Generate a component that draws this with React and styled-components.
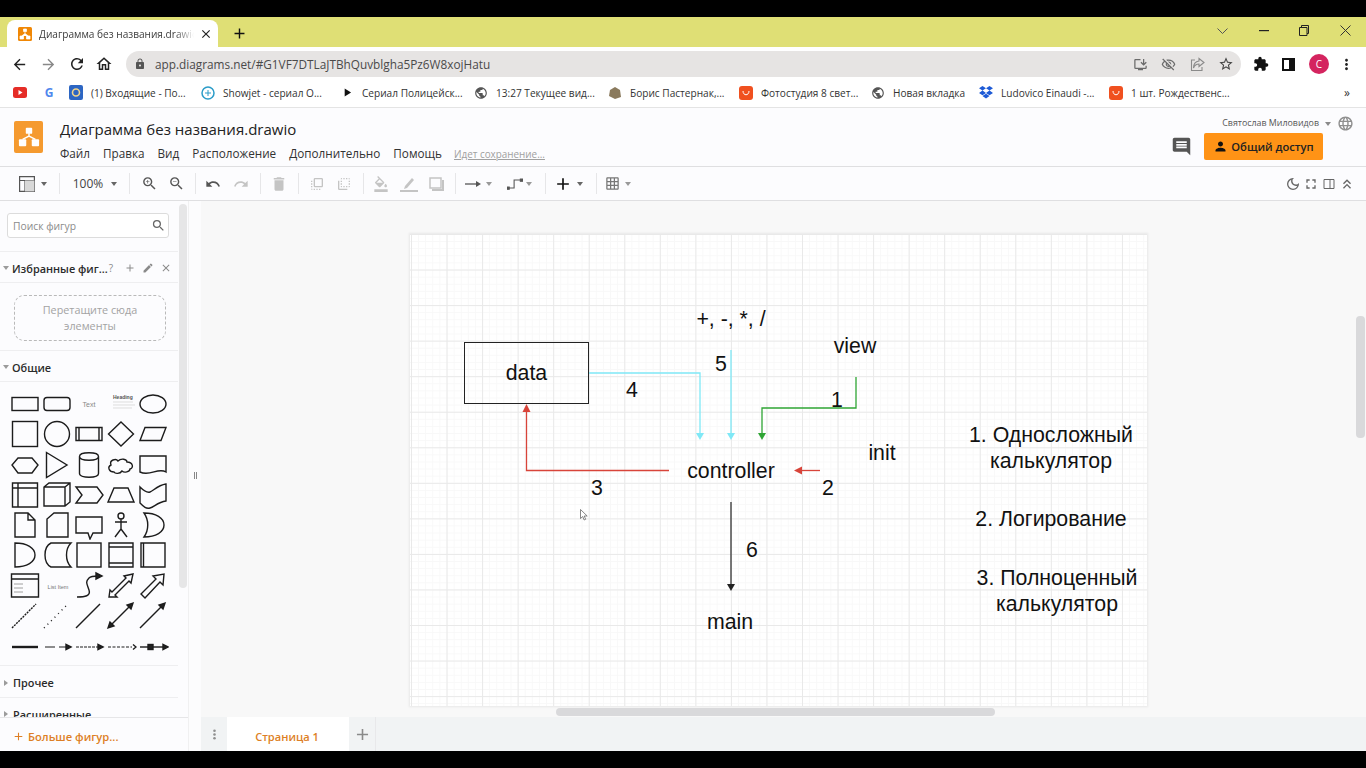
import React from 'react';
import styled, { createGlobalStyle } from 'styled-components';
import {
  MdArrowBack, MdArrowForward, MdRefresh, MdLock, MdStarBorder, MdExtension, MdMoreVert, MdPerson,
  MdZoomIn, MdZoomOut, MdUndo, MdRedo, MdDelete, MdFlipToFront, MdFlipToBack, MdFormatColorFill,
  MdOutlineDarkMode, MdFullscreen, MdKeyboardDoubleArrowUp, MdLanguage, MdSearch, MdEdit, MdClose, MdAdd,
  MdGridOn, MdComment, MdPublic, MdPlayArrow, MdOutlineHome, MdInstallDesktop, MdOutlineVisibilityOff,
} from 'react-icons/md';

const Global = createGlobalStyle`
  html, body { margin: 0; padding: 0; background: #000; overflow: hidden; }
  * { box-sizing: border-box; }
  body { font-family: "Open Sans", "Liberation Sans", sans-serif; }
`;

const Page = styled.div`
  width: 1366px; height: 768px; display: flex; flex-direction: column; background: #000; overflow: hidden;
`;
const BlackBand = styled.div`height: ${p => p.$h}px; flex: none; background: #000;`;

/* browser chrome */
const TabStrip = styled.div`
  height: 30px; flex: none; background: #dfdf75; display: flex; align-items: flex-end; padding-left: 7px; position: relative;
`;
const Tab = styled.div`
  width: 211px; height: 27px; background: #fff; border-radius: 8px 8px 0 0; display: flex; align-items: center; padding-left: 11px;
`;
const TabTitle = styled.span`
  font: 10.1px "Open Sans", sans-serif; color: #3c3c3c; margin-left: 7px; width: 155px; white-space: nowrap; overflow: hidden;
  -webkit-mask-image: linear-gradient(90deg, #000 88%, transparent 100%);
  mask-image: linear-gradient(90deg, #000 88%, transparent 100%);
`;
const TabClose = styled.span`display: flex; margin-left: 5px; color: #222;`;
const NewTab = styled.span`display: flex; margin: 0 0 5px 13px; color: #111;`;
const WindowControls = styled.div`
  margin-left: auto; height: 27px; display: flex; align-items: center; color: #333; padding-right: 13px; margin-bottom: 3px;
`;
const WinBtn = styled.span`display: flex; justify-content: center; width: 16px; margin-left: ${p => p.$ml}px;`;

const NavBar = styled.div`height: 31px; flex: none; background: #fff; display: flex; align-items: center; padding: 3px 0 0 11px;`;
const NavIcon = styled.span`display: flex; width: ${p => p.$w}px; flex: none; justify-content: flex-start; color: ${p => p.$c || '#222'};`;
const Omnibox = styled.div`
  width: 1115px; height: 26px; border-radius: 13px; background: #e6e4e3; display: flex; align-items: center; padding: 0 0 0 8px;
`;
const Url = styled.span`font: 11.8px "Open Sans", sans-serif; color: #4a4a4a; margin-left: 9px; flex: 1; white-space: nowrap;`;
const OmniIcon = styled.span`display: flex; width: 28.5px; justify-content: center; color: ${p => p.$c || '#6b6b6b'};`;
const OmniEnd = styled.span`width: 1px; flex: none;`;
const NavRight = styled.div`display: flex; align-items: center; margin-left: 12px;`;
const Avatar = styled.span`
  width: 20px; height: 20px; border-radius: 50%; background: #d4245f; color: #fff; font: 10px "Open Sans", sans-serif; display: flex; align-items: center; justify-content: center; margin: 0 9px 0 14px;
`;

const Bookmarks = styled.div`
  height: 30px; flex: none; background: #fff; border-bottom: 1px solid #e4e4e4; display: flex; align-items: center; padding-left: 13px; position: relative;
`;
const Bookmark = styled.span`
  display: flex; align-items: center; width: ${p => p.$w}px; flex: none; font: 10.1px "Open Sans", sans-serif; color: #333; white-space: nowrap; gap: 8px;
`;
const BmIcon = styled.span`display: flex; width: 14px; height: 14px; flex: none; align-items: center; justify-content: center;`;
const GoogleG = styled.span`font: 700 12px "Open Sans", sans-serif; color: #4f87ed;`;
const More = styled.span`margin-left: auto; margin-right: 16px; font: 12px "Open Sans", sans-serif; color: #333;`;

/* draw.io header */
const Header = styled.header`
  height: 59px; flex: none; background: #fcfcfe; border-bottom: 1px solid #dfdfe1; display: flex; padding: 13px 0 0 14px; position: relative;
`;
const Logo = styled.div`width: 29px; height: 32px; border-radius: 2px; background: #f59a2f; flex: none; display: flex; align-items: center; justify-content: center;`;
const TitleBlock = styled.div`margin-left: 17px; display: flex; flex-direction: column;`;
const Title = styled.div`font: 15px/17px "Open Sans", sans-serif; color: #222;`;
const Menu = styled.nav`display: flex; align-items: baseline; gap: 13px; margin-top: 8px;`;
const MenuItem = styled.span`font: 11.72px/15px "Open Sans", sans-serif; color: #333;`;
const Saving = styled.span`font: 9.9px/15px "Open Sans", sans-serif; color: #a0a0a0; text-decoration: underline; margin-left: -1px;`;
const HeaderRight = styled.div`margin-left: auto; display: flex; flex-direction: column; align-items: flex-end; padding-right: 12px; margin-top: -6px;`;
const UserRow = styled.div`display: flex; align-items: center; color: #8f8f8f;`;
const UserName = styled.span`font: 8.85px "Open Sans", sans-serif; color: #555; margin: 0 6px 2px 0;`;
const Caret = styled.span`
  display: block; width: 0; height: 0; flex: none; border-left: 3.5px solid transparent; border-right: 3.5px solid transparent; border-top: 4px solid ${p => p.$c || '#8a8a8a'};
`;
const Globe = styled.span`display: flex; margin-left: 6px;`;
const ShareRow = styled.div`display: flex; align-items: center; margin-top: 1px; margin-right: 31px;`;
const ShareBtn = styled.div`
  width: 119px; height: 27px; background: #ff9316; border-radius: 2px; margin-left: 12px; display: flex; align-items: center; justify-content: center; gap: 3px;
  font: 600 11.2px "Open Sans", sans-serif; color: #222;
`;

/* toolbar */
const Toolbar = styled.div`
  height: 34px; flex: none; background: #fcfcfe; border-bottom: 1px solid #dfdfe1; display: flex; align-items: center; padding: 0 11px 0 13px;
`;
const Tool = styled.span`
  display: flex; width: ${p => p.$w}px; margin-left: ${p => p.$ml || 0}px; flex: none; align-items: center; justify-content: center; color: ${p => p.$off ? '#c4c4c4' : '#555'};
  & > svg { flex: none; }
`;
const Zoom100 = styled.span`width: 34px; flex: none; font: 12px "Open Sans", sans-serif; color: #444; text-align: center;`;
const Sep = styled.span`
  width: ${p => p.$w}px; height: 21px; flex: none; display: flex; justify-content: center;
  &::before { content: ""; width: 1px; height: 100%; background: #e6e6e8; }
`;
const ToolRight = styled.div`margin-left: auto; display: flex; align-items: center; gap: 2px; color: #666;`;

/* main */
const Body = styled.div`flex: 1; min-height: 0; display: flex; background: #fcfcfe;`;
const Sidebar = styled.aside`width: 188px; flex: none; display: flex; flex-direction: column;`;
const SideScroll = styled.div`height: 516px; flex: none; display: flex; overflow: hidden;`;
const SideContent = styled.div`width: 178px; flex: none;`;
const SideTrack = styled.div`width: 10px; flex: none; padding: 3px 1px 0;`;
const SideThumb = styled.div`width: 8px; height: 384px; border-radius: 4px; background: #e6e6e7;`;
const SearchWrap = styled.div`height: 51px; padding: 12px 0 0 7px; border-bottom: 1px solid #eeeef0;`;
const Search = styled.div`
  width: 162px; height: 25px; background: #fff; border: 1px solid #dcdcdc; border-radius: 3px; display: flex; align-items: center; justify-content: space-between; padding: 0 2px 0 5px;
  font: 10.3px "Open Sans", sans-serif; color: #8b8b8b;
`;
const SectionHead = styled.div`
  height: ${p => p.$h}px; display: flex; align-items: center; border-bottom: ${p => p.$flat ? 'none' : '1px solid #eeeef0'};
  padding: ${p => p.$flat ? 0 : 2}px 0 0 3px; font: 600 10.9px "Open Sans", sans-serif; color: #2b2b2b; white-space: nowrap;
`;
const Tri = styled.span`
  display: block; width: 0; height: 0; flex: none; margin-right: 3px;
  ${p => p.$closed
    ? 'border-top: 3.5px solid transparent; border-bottom: 3.5px solid transparent; border-left: 4px solid #9b9b9b; margin-left: 1px; margin-right: 5px;'
    : 'border-left: 3.5px solid transparent; border-right: 3.5px solid transparent; border-top: 4px solid #9b9b9b;'}
`;
const FavTools = styled.span`display: flex; align-items: center; margin-left: 1px; color: #8a8a8a; font-weight: 400;`;
const FavHelp = styled.span`font-size: 10px; width: 11px;`;
const FavTool = styled.span`display: flex; margin: 0 ${p => p.$r}px 0 ${p => p.$l}px;`;
const FavBox = styled.div`height: 68px; padding: 12px 0 0 14px; border-bottom: 1px solid #eeeef0;`;
const Dashed = styled.div`
  width: 152px; height: 46px; border: 1px dashed #b9b9b9; border-radius: 10px; display: flex; align-items: center; justify-content: center; text-align: center;
  font: 10.8px/16px "Open Sans", sans-serif; color: #a3a3a3;
`;
const ShapeGrid = styled.div`
  height: 284px; border-bottom: 1px solid #eeeef0; padding: 7px 0 0 9px; display: grid; grid-template-columns: repeat(5, 32px); grid-auto-rows: 30.25px;
`;
const Shape = styled.svg`display: block; width: 32px; height: 30px; fill: none; stroke: #1c1c1c; stroke-width: 1.4;`;
const MoreShapes = styled.div`
  flex: 1; border-top: 1px solid #e6e6e8; display: flex; align-items: center; padding: 3px 0 0 12px; gap: 3px; font: 600 11.2px "Open Sans", sans-serif; color: #dd7f25;
`;
const Gutter = styled.div`
  width: 13px; flex: none; background: #fcfcfd; border-left: 1px solid #f0f0f1; display: flex; flex-direction: column; align-items: center; padding-top: 271px;
`;
const Grip = styled.span`width: 3px; height: 7px; border-left: 1px solid #888; border-right: 1px solid #888;`;
const Work = styled.main`flex: 1; min-width: 0; display: flex; flex-direction: column;`;
const Canvas = styled.div`height: 516px; flex: none; background: #f8f8f8; position: relative; overflow: hidden;`;
const Sheet = styled.div`
  position: absolute; left: 209px; top: 33px; width: 737px; height: 472px; box-shadow: 0 0 2px 1px #e8e8e8;
  background-color: #fff;
  background-image:
    linear-gradient(#e9e9e9 1px, transparent 1px),
    linear-gradient(90deg, #e9e9e9 1px, transparent 1px),
    linear-gradient(#f8f8f8 1px, transparent 1px),
    linear-gradient(90deg, #f8f8f8 1px, transparent 1px);
  background-size: 35.55px 35.55px, 35.55px 35.55px, 7.11px 7.11px, 7.11px 7.11px;
  background-position: 0 0, 1px 0, 0 0, 1px 0;
`;
const Wires = styled.svg`position: absolute; left: 0; top: 0; width: 738px; height: 472px; fill: none;`;
const DataNode = styled.div`
  position: absolute; left: 54px; top: 108px; width: 125px; height: 62px; border: 1px solid #222; background: transparent;
  display: flex; align-items: center; justify-content: center; font: 21.3px "Liberation Sans", sans-serif; color: #111;
`;
const Label = styled.div`
  position: absolute; left: ${p => p.$x - 410}px; top: ${p => p.$y - 234}px; transform: translate(-50%, -50%); white-space: nowrap; text-align: center;
  font: 21.3px/26px "Liberation Sans", sans-serif; color: #111;
`;
const HScroll = styled.div`position: absolute; left: 355px; top: 507px; width: 439px; height: 8px; border-radius: 4px; background: #d9d9db;`;
const VScroll = styled.div`position: absolute; right: 1px; top: 115px; width: 9px; height: 122px; border-radius: 4px; background: #d9d9db;`;
const PointerMark = styled.svg`position: absolute; left: 170px; top: 275px; width: 9px; height: 12px;`;
const TabBar = styled.div`flex: 1; background: #f1f3f4; display: flex; align-items: stretch;`;
const Dots = styled.span`width: 26px; flex: none; display: flex; align-items: center; justify-content: center; color: #8f8f8f;`;
const PageTab = styled.div`
  width: 122px; flex: none; background: #fff; display: flex; align-items: center; justify-content: center; padding: 5px 2px 0 0; font: 600 11.1px "Open Sans", sans-serif; color: #dd7f25;
`;
const AddPage = styled.span`width: 27px; flex: none; display: flex; align-items: center; justify-content: center; color: #8a8a8a; border-right: 1px solid #e8e8ea;`;

const DotsIcon = () => (
  <svg width="13" height="13" viewBox="0 0 24 24" fill="currentColor">
    <circle cx="12" cy="5" r="2.4" /><circle cx="12" cy="12" r="2.4" /><circle cx="12" cy="19" r="2.4" />
  </svg>
);

const DrawLogo = ({ s = 22, bg = '#fff' }) => (
  <svg width={s} height={s} viewBox="0 0 24 24">
    <rect x="8.5" y="2" width="7" height="6.5" rx="1" fill={bg} />
    <rect x="1" y="14.5" width="8" height="7.5" rx="1" fill={bg} />
    <rect x="15" y="14.5" width="8" height="7.5" rx="1" fill={bg} />
    <path d="M12 8v3.5M5 14.5L12 11l7 3.5" stroke={bg} strokeWidth="1.6" fill="none" />
  </svg>
);

const shapes = [
  <rect x="3" y="8.5" width="26" height="13" />,
  <rect x="3" y="8.5" width="26" height="13" rx="3" />,
  <text x="16" y="18" fontSize="7" fill="#888" stroke="none" textAnchor="middle" fontFamily="Liberation Sans">Text</text>,
  <g stroke="none"><text x="8" y="10" fontSize="5" fontWeight="700" fill="#555" fontFamily="Liberation Sans">Heading</text><path d="M8 13h20M8 16h22M8 19h19" stroke="#ddd" strokeWidth="1" /></g>,
  <ellipse cx="16" cy="15" rx="13" ry="9" />,

  <rect x="3.5" y="2.5" width="25" height="25" />,
  <circle cx="16" cy="15" r="12.5" />,
  <path d="M3 8.5h26v13H3zM6 8.5v13M26 8.5v13" />,
  <path d="M16 3l12.5 12L16 27 3.5 15z" />,
  <path d="M8 8.5h21l-5 13H3z" />,

  <path d="M9 8h14l6 7-6 8H9l-6-8z" />,
  <path d="M5.5 2.5L26 15 5.5 27.5z" />,
  <path d="M6.5 6.5c0-5 19-5 19 0v17c0 5-19 5-19 0zM6.5 6.5c0 5 19 5 19 0" />,
  <path d="M9 22c-5 0-7-5-3-7-2-5 5-7 7-4 3-3 9-2 9 1 6 0 7 6 3 7 0 3-6 4-8 2-2 3-7 3-8 1z" />,
  <path d="M3 6h26v16c-8-5-16 5-26 0z" />,

  <path d="M3.5 3h25v24h-25zM3.5 8h25M9 3v24" />,
  <path d="M3 7l5-4h21v19l-5 4H3zM3 7h21v19M24 7l5-4" />,
  <path d="M3 7h21l6 8-6 8H3l6-8z" />,
  <path d="M9 8h14l6 14H3z" />,
  <path d="M3 7c4 4 7 6 10 5s8-7 16-8v17c-8 1-12 6-16 7s-6-1-10-5z" />,

  <path d="M6 3h13l7 7v17H6zM19 3v7h7" />,
  <path d="M13 3h14v24H6V9z" />,
  <path d="M3 7h26v16H20l-3 6-2-6H3z" />,
  <path d="M16 3a3 3 0 100 6 3 3 0 000-6zM16 9v10M10 12h12M16 19l-6 8M16 19l6 8" />,
  <path d="M7 3c12 0 20 5 20 12s-8 12-20 12c5-7 5-17 0-24z" />,

  <path d="M6 3c12 0 20 5 20 12S18 27 6 27z" />,
  <path d="M10 3h20c-6 6-6 18 0 24H10C2 23 2 7 10 3z" />,
  <rect x="4" y="3" width="24" height="24" />,
  <path d="M4 3h24v24H4zM4 7h24M4 23h24" />,
  <path d="M4 3h24v24H4zM6.5 3v24" />,

  <g><path d="M2.5 3h27v23h-27zM2.5 8h27" /><path d="M5 13h9M5 17h9M5 21h9" stroke="#888" strokeWidth=".8" /></g>,
  <text x="17" y="18" fontSize="5.5" fill="#777" stroke="none" textAnchor="middle" fontFamily="Liberation Sans">List Item</text>,
  <g><path d="M4 26c8 0 14-1 12-7s-4-8 0-12c2-2 6-2 9-2" /><path d="M23 2l6 3-6 3z" fill="#222" /></g>,
  <path d="M4 26l1-7 2 2L21 7l-2-2 9-2-2 9-2-2L10 24l2 2z" />,
  <path d="M4 23L19 8l-3-3 11-2-1 11-3-3L8 27z" />,

  <path d="M3 27L27 3" strokeDasharray="2 1" />,
  <path d="M3 27L27 3" strokeDasharray="1 4" />,
  <path d="M3 27L27 3" />,
  <g><path d="M6 24L25 5" /><path d="M3 27l2-6 4 4zM28 2l-2 6-4-4z" fill="#222" /></g>,
  <g><path d="M3 27L25 5" /><path d="M28 2l-2 6-4-4z" fill="#222" /></g>,

  <path d="M3 16h26" strokeWidth="2.4" />,
  <g><path d="M4 16h10M18 16h8" strokeWidth="1" /><path d="M30 16l-5-2.5v5z" fill="#222" /></g>,
  <g><path d="M3 16h24" strokeWidth="1" strokeDasharray="3 1" /><path d="M30 16l-5-2.5v5z" fill="#222" /></g>,
  <g><path d="M3 16h24" strokeWidth="1" strokeDasharray="3 1.5" /><path d="M28 13.5l3 2.5-3 2.5" /></g>,
  <g><path d="M3 16h26" /><rect x="11" y="13.5" width="5" height="5" fill="#222" /><path d="M31 16l-5-2.5v5z" fill="#222" /></g>,
];

const Basket = () => (
  <svg width="14" height="14" viewBox="0 0 14 14"><rect width="14" height="14" rx="3" fill="#f0501f" /><path d="M4 5c0 5 6 5 6 0" stroke="#fff" fill="none" /></svg>
);

const bookmarks = [
  { w: 29, icon: <svg width="14" height="11" viewBox="0 0 14 11"><rect width="14" height="11" rx="2.5" fill="#e52d27" /><path d="M5.5 3l4 2.5-4 2.5z" fill="#fff" /></svg> },
  { w: 27, icon: <GoogleG>G</GoogleG> },
  { w: 132, icon: <svg width="14" height="15" viewBox="0 0 14 15"><rect width="14" height="15" rx="2" fill="#2d66c3" /><circle cx="7" cy="7.5" r="3.5" fill="none" stroke="#f4d58a" strokeWidth="1.6" /></svg>, t: '(1) Входящие - По...' },
  { w: 139, icon: <svg width="14" height="14" viewBox="0 0 14 14"><circle cx="7" cy="7" r="6" fill="none" stroke="#2b9cc8" strokeWidth="1.5" /><path d="M4 7h6M7 4v6" stroke="#2b9cc8" /></svg>, t: 'Showjet - сериал О...' },
  { w: 134, icon: <MdPlayArrow size={19} color="#111" />, t: 'Сериал Полицейск...' },
  { w: 134, icon: <MdPublic size={16} color="#555" />, t: '13:27 Текущее вид...' },
  { w: 131, icon: <svg width="14" height="14" viewBox="0 0 14 14"><path d="M2 4l5-3 5 3 1 7-6 2-6-3z" fill="#8a7a5d" /></svg>, t: 'Борис Пастернак,...' },
  { w: 132, icon: <Basket />, t: 'Фотостудия 8 свет...' },
  { w: 108, icon: <MdPublic size={16} color="#555" />, t: 'Новая вкладка' },
  { w: 130, icon: <svg width="14" height="13" viewBox="0 0 14 13" fill="#1d5ad6"><path d="M3.5 0L7 2.3 3.5 4.6 0 2.3zM10.5 0L14 2.3l-3.5 2.3L7 2.3zM3.5 4.6L7 6.9 3.5 9.2 0 6.9zM10.5 4.6L14 6.9l-3.5 2.3L7 6.9zM3.5 10L7 7.8l3.5 2.2L7 12.5z" /></svg>, t: 'Ludovico Einaudi -...' },
  { w: 130, icon: <Basket />, t: '1 шт. Рождественс...' },
];

const WaypointIcon = () => <svg width="16" height="13" viewBox="0 0 18 14" fill="none" stroke="#555" strokeWidth="1.2"><path d="M2 12h6V3h7" /><rect x="0" y="11" width="2.5" height="2.5" fill="#555" /><rect x="15" y="2" width="2.5" height="2.5" fill="#555" /></svg>;
const ArrowIcon = () => <svg width="16" height="8" viewBox="0 0 16 8"><path d="M0 4h11" stroke="#555" strokeWidth="1.3" /><path d="M16 4l-5-3v6z" fill="#555" /></svg>;
const LineIcon = () => <svg width="18" height="16" viewBox="0 0 18 16"><path d="M5 10L12 2l2 2-7 8-3 1z" fill="#c4c4c4" /><rect y="14" width="18" height="2" fill="#c4c4c4" /></svg>;
const ShadowIcon = () => <svg width="15" height="14" viewBox="0 0 15 14"><rect x="1" y="1" width="11" height="10" fill="none" stroke="#c4c4c4" strokeWidth="1.5" /><path d="M14 3v10H3" fill="none" stroke="#c4c4c4" strokeWidth="2" /></svg>;
const PanelIcon = () => <svg width="16" height="16" viewBox="0 0 16 16" fill="none" stroke="#555" strokeWidth="1.2"><path d="M.6.6h14.800v14.800H.6zM.6 4.500h14.800M6 4.500v10.900" /><rect x="6" y="4.500" width="9.400" height="10.900" fill="#d8d8d8" stroke="none" /></svg>;
const ShareOutline = () => <svg width="15" height="15" viewBox="0 0 15 15" fill="none" stroke="#8a8a8a" strokeWidth="1.1"><path d="M5 3H1.500v10.500H12V10" /><path d="M9 1.500L14 5.500 9 9.500V7C6 7 4.500 8.500 3.500 11c0-4 2-6.500 5.500-7z" /></svg>;

const RedWire = '#d8443a';
const Cyan = '#7fe8f6';
const Green = '#2fa534';

export default function App() {
  return (
    <Page>
      <Global />
      <BlackBand $h={17} />
      <TabStrip>
        <Tab>
          <svg width="14" height="14" viewBox="0 0 14 14"><rect width="14" height="14" rx="1.5" fill="#f08705" /><path d="M5.5 2h3v2.500h-3zM2 9h3.500v3H2zM8.500 9H12v3H8.500zM7 4.500v2M3.700 9L7 6.500 10.300 9" fill="#fff" stroke="#fff" strokeWidth=".7" /></svg>
          <TabTitle>Диаграмма без названия.drawio</TabTitle>
          <TabClose><MdClose size={14} /></TabClose>
        </Tab>
        <NewTab><MdAdd size={17} /></NewTab>
        <WindowControls>
          <svg width="11" height="6" viewBox="0 0 11 6" fill="none" stroke="#555"><path d="M.5.5l5 5 5-5" /></svg>
          <WinBtn $ml={28}><svg width="10" height="2"><rect width="10" height="1.2" fill="#222" /></svg></WinBtn>
          <WinBtn $ml={24}><svg width="10" height="11" viewBox="0 0 10 11" fill="none" stroke="#222"><path d="M.5 2.500h7.500v8H.5zM2.500 2.500V.5H9.500v8H8" /></svg></WinBtn>
          <WinBtn $ml={25}><svg width="11" height="11" viewBox="0 0 11 11" stroke="#333"><path d="M.5.5l10 10M10.500.5l-10 10" /></svg></WinBtn>
        </WindowControls>
      </TabStrip>
      <NavBar>
        <NavIcon $w={29}><MdArrowBack size={17} /></NavIcon>
        <NavIcon $w={28} $c="#888"><MdArrowForward size={17} /></NavIcon>
        <NavIcon $w={27}><MdRefresh size={18} /></NavIcon>
        <NavIcon $w={31}><MdOutlineHome size={18} /></NavIcon>
        <Omnibox>
          <MdLock size={12} color="#555" />
          <Url>app.diagrams.net/#G1VF7DTLaJTBhQuvblgha5Pz6W8xojHatu</Url>
          <OmniIcon><MdInstallDesktop size={15} /></OmniIcon>
          <OmniIcon><MdOutlineVisibilityOff size={15} /></OmniIcon>
          <OmniIcon><ShareOutline /></OmniIcon>
          <OmniIcon $c="#444"><MdStarBorder size={16} /></OmniIcon>
          <OmniEnd />
        </Omnibox>
        <NavRight>
          <NavIcon $w={29}><MdExtension size={16} color="#111" /></NavIcon>
          <svg width="13" height="13" viewBox="0 0 13 13"><rect x="1" y="1" width="11" height="11" fill="none" stroke="#111" strokeWidth="2" /><rect x="7" y="1" width="5" height="11" fill="#111" /></svg>
          <Avatar>C</Avatar>
          <MdMoreVert size={17} color="#222" />
        </NavRight>
      </NavBar>
      <Bookmarks>
        {bookmarks.map((b, i) => (
          <Bookmark key={i} $w={b.w}><BmIcon>{b.icon}</BmIcon>{b.t}</Bookmark>
        ))}
        <More>»</More>
      </Bookmarks>

      <Header>
        <Logo><DrawLogo /></Logo>
        <TitleBlock>
          <Title>Диаграмма без названия.drawio</Title>
          <Menu>
            <MenuItem>Файл</MenuItem><MenuItem>Правка</MenuItem><MenuItem>Вид</MenuItem>
            <MenuItem>Расположение</MenuItem><MenuItem>Дополнительно</MenuItem><MenuItem>Помощь</MenuItem>
            <Saving>Идет сохранение...</Saving>
          </Menu>
        </TitleBlock>
        <HeaderRight>
          <UserRow><UserName>Святослав Миловидов</UserName><Caret /><Globe><MdLanguage size={17} /></Globe></UserRow>
          <ShareRow>
            <MdComment size={21} color="#555" />
            <ShareBtn><MdPerson size={15} color="#111" />Общий доступ</ShareBtn>
          </ShareRow>
        </HeaderRight>
      </Header>

      <Toolbar>
        <Tool $w={28}><PanelIcon /></Tool><Tool $w={6}><Caret $c="#666" /></Tool><Sep $w={24} />
        <Zoom100>100%</Zoom100><Tool $w={18}><Caret $c="#666" /></Tool><Sep $w={12} />
        <Tool $w={28}><MdZoomIn size={17} /></Tool><Tool $w={26}><MdZoomOut size={17} /></Tool><Sep $w={12} />
        <Tool $w={24}><MdUndo size={16} /></Tool><Tool $w={32} $off><MdRedo size={16} /></Tool><Sep $w={6} />
        <Tool $w={32} $off><MdDelete size={18} /></Tool><Sep $w={6} />
        <Tool $w={32} $off><MdFlipToFront size={16} /></Tool><Tool $w={22} $off><MdFlipToBack size={16} /></Tool><Sep $w={16} />
        <Tool $w={20} $off><MdFormatColorFill size={16} /></Tool><Tool $w={36}><LineIcon /></Tool><Tool $w={18}><ShadowIcon /></Tool><Sep $w={20} />
        <Tool $w={16}><ArrowIcon /></Tool><Tool $w={16} $off><Caret $c="#999" /></Tool>
        <Tool $w={18} $ml={9}><WaypointIcon /></Tool><Tool $w={10}><Caret $c="#999" /></Tool><Sep $w={22} />
        <Tool $w={14}><MdAdd size={20} color="#111" /></Tool><Tool $w={20}><Caret $c="#666" /></Tool><Sep $w={12} />
        <Tool $w={20}><MdGridOn size={15} color="#777" /></Tool><Tool $w={12}><Caret $c="#999" /></Tool>
        <ToolRight>
          <MdOutlineDarkMode size={16} />
          <MdFullscreen size={16} />
          <svg width="16" height="16" viewBox="0 0 16 16" fill="none" stroke="#666"><path d="M3 3.5h10v9H3zM9 3.5v9" /></svg>
          <MdKeyboardDoubleArrowUp size={16} />
        </ToolRight>
      </Toolbar>

      <Body>
        <Sidebar>
          <SideScroll>
            <SideContent>
              <SearchWrap><Search>Поиск фигур<MdSearch size={15} color="#666" /></Search></SearchWrap>
              <SectionHead $h={31}>
                <Tri />
                Избранные фиг...
                <FavTools>
                  <FavHelp>?</FavHelp>
                  <FavTool $l={4} $r={5}><MdAdd size={12} /></FavTool>
                  <FavTool $l={1} $r={6}><MdEdit size={12} /></FavTool>
                  <MdClose size={12} />
                </FavTools>
              </SectionHead>
              <FavBox><Dashed>Перетащите сюда<br />элементы</Dashed></FavBox>
              <SectionHead $h={31}><Tri />Общие</SectionHead>
              <ShapeGrid>
                {shapes.map((s, i) => <Shape key={i} viewBox="0 0 32 30">{s}</Shape>)}
              </ShapeGrid>
              <SectionHead $h={32}><Tri $closed />Прочее</SectionHead>
              <SectionHead $h={32} $flat><Tri $closed />Расширенные</SectionHead>
            </SideContent>
            <SideTrack><SideThumb /></SideTrack>
          </SideScroll>
          <MoreShapes><MdAdd size={13} />Больше фигур...</MoreShapes>
        </Sidebar>
        <Gutter><Grip /></Gutter>
        <Work>
          <Canvas>
            <Sheet>
              <DataNode>data</DataNode>
              <Wires viewBox="410 234 738 472">
                <path d="M589 373H700V434" stroke={Cyan} strokeWidth="1.3" />
                <path d="M696 433l4 7 4-7z" fill={Cyan} />
                <path d="M731 350V434" stroke={Cyan} strokeWidth="1.3" />
                <path d="M727 433l4 7 4-7z" fill={Cyan} />
                <path d="M856 377V408H762V434" stroke={Green} strokeWidth="1.3" />
                <path d="M758 433l4 7 4-7z" fill={Green} />
                <path d="M669 470.5H526.5V410" stroke={RedWire} strokeWidth="1.3" />
                <path d="M522.5 412l4-8 4 8z" fill={RedWire} />
                <path d="M820 470.5H800" stroke={RedWire} strokeWidth="1.3" />
                <path d="M802 466.5l-8 4 8 4z" fill={RedWire} />
                <path d="M731 502V585" stroke="#333" strokeWidth="1.3" />
                <path d="M727 584l4 7 4-7z" fill="#222" />
              </Wires>
              <Label $x={731} $y={319}>+, -, *, /</Label>
              <Label $x={855} $y={346}>view</Label>
              <Label $x={721} $y={364}>5</Label>
              <Label $x={632} $y={390}>4</Label>
              <Label $x={837} $y={400}>1</Label>
              <Label $x={882} $y={453}>init</Label>
              <Label $x={731} $y={471}>controller</Label>
              <Label $x={828} $y={488}>2</Label>
              <Label $x={597} $y={488}>3</Label>
              <Label $x={752} $y={550}>6</Label>
              <Label $x={730} $y={622}>main</Label>
              <Label $x={1051} $y={448}>1. Односложный<br />калькулятор</Label>
              <Label $x={1051} $y={519}>2. Логирование</Label>
              <Label $x={1057} $y={590.5}>3. Полноценный<br />калькулятор</Label>
              <PointerMark viewBox="0 0 9 12"><path d="M.5.5v9l2.200-2 1.500 3.500 1.500-.7-1.500-3.300h3z" fill="#fff" stroke="#555" strokeWidth=".7" /></PointerMark>
            </Sheet>
            <HScroll />
            <VScroll />
          </Canvas>
          <TabBar>
            <Dots><DotsIcon /></Dots>
            <PageTab>Страница 1</PageTab>
            <AddPage><MdAdd size={19} /></AddPage>
          </TabBar>
        </Work>
      </Body>
      <BlackBand $h={17} />
    </Page>
  );
}
